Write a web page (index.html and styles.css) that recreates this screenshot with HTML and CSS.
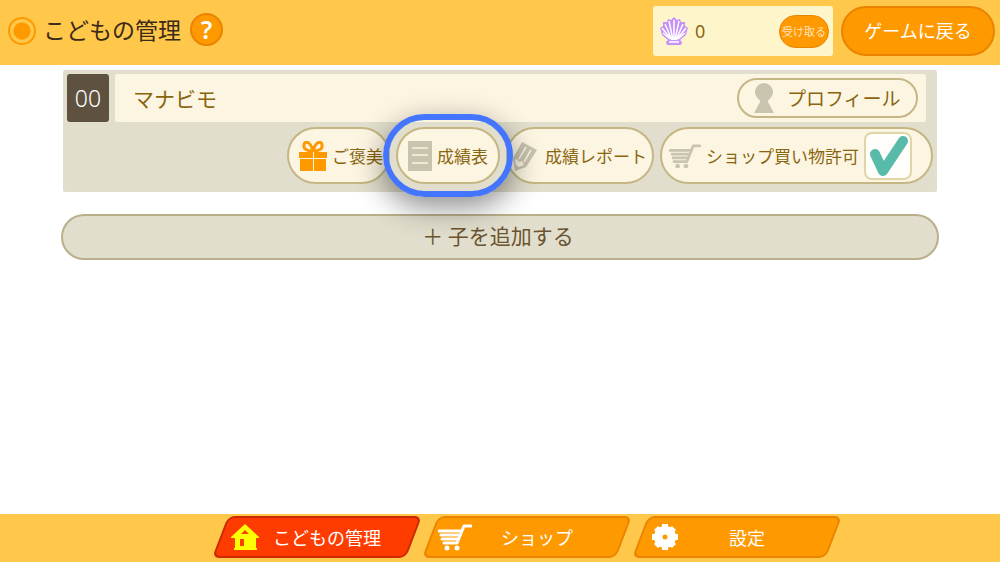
FILE: index.html
```html
<!DOCTYPE html>
<html lang="ja">
<head>
  <meta charset="UTF-8">
  <meta name="viewport" content="width=device-width, initial-scale=1.0">
  <title>こどもの管理</title>
  <link rel="stylesheet" href="styles.css">
</head>

<body>
  <header class="header">
    <span class="header-mark"></span>
    <h1 class="title">こどもの管理</h1>
    <button type="button" class="help-button">?</button>

    <div class="shell-box">
      <svg class="shell-icon" viewBox="0 0 28 28">
        <path d="M8 23 L2 18 L1 14 L0 11 L3 9 L3 5 L7 5 L8 2 L11 3 L14 0 L17 3 L20 2 L21 5 L25 5 L25 9 L28 11 L27 14 L26 18 L20 23 L22 25 L21 28 L7 28 L6 25 Z" fill="#c590f7"/>
        <path d="M14 23 V3 M13 23 L9 4 M15 23 L19 4 M12 23 L5 7 M16 23 L23 7 M11 22 L2 11 M17 22 L26 11 M10 22 L3 16 M18 22 L25 16 M9 25 H19" fill="none" stroke="#fff" stroke-width="1.5"/>
      </svg>
      <span class="shell-count">0</span>
      <button type="button" class="receive-button">受け取る</button>
    </div>
    <button type="button" class="back-button">ゲームに戻る</button>
  </header>

  <main class="main">
    <section class="child-card">
      <div class="child-row">
        <span class="child-number">00</span>
        <div class="child-name">
          <span>マナビモ</span>
          <button type="button" class="pill profile-button">
            <svg class="profile-icon" viewBox="0 0 20 30">
              <circle cx="10" cy="9" r="9"/>
              <path d="M5 15 H15 L14 19 L20 30 H0 L6 19 Z"/>
            </svg>
            プロフィール
          </button>
        </div>
      </div>

      <div class="actions">
        <button type="button" class="pill action reward">
          <svg class="gift-icon" viewBox="0 0 28 30">
            <path d="M14 10 C11 -1 5 0 5 4 C4 8 8 10 14 10 C20 10 24 8 23 4 C23 0 17 -1 14 10 Z" fill="none" stroke="#ff9900" stroke-width="3"/>
            <path d="M0 11 H28 V17 H0 Z M1 18 H14 V30 H1 Z M15 18 H27 V30 H15 Z" fill="#ff9900"/>
            <path d="M14.500 11 V30 M1 17.500 H27" stroke="#fcf5e2" stroke-width="1"/>
          </svg>
          ご褒美
        </button>
        <button type="button" class="pill action score selected">
          <svg class="list-icon" viewBox="0 0 24 30">
            <path d="M0 0 H24 V30 H0 Z" fill="#c9c4ae"/>
            <path d="M4 7 H20 M4 14 H20 M4 22 H20" stroke="#faf4e1" stroke-width="1.500"/>
          </svg>
          成績表
        </button>
        <button type="button" class="pill action report">
          <svg class="pencil-icon" viewBox="0 0 26 30">
            <path d="M10 1 L25 9 L14 26 L3 30 L1 17 Z" fill="#c9c4ae"/>
            <path d="M14 6 L7 18 M19 9 L12 21" fill="none" stroke="#faf4e1" stroke-width="1.500"/>
            <path d="M3 19 L5 18 L7 21 L10 20 L12 24 L7 26 L4 24 Z" fill="#faf4e1"/>
          </svg>
          成績レポート
        </button>
        <label class="pill action shop">
          <svg class="cart-icon" viewBox="0 0 34 26">
            <path d="M33 2 H26 L19 19 H5" class="cart-line"/>
            <path d="M1 7 H23 M3 11 H22 M4 15 H20" class="cart-line"/>
            <circle cx="9" cy="24" r="2.500"/>
            <circle cx="18" cy="24" r="2.500"/>
          </svg>
          ショップ買い物許可
          <span class="check">
            <input type="checkbox" class="check-input" checked>
            <svg class="check-icon" viewBox="0 0 48 48">
              <path d="M11 22 L19 39 L39 9"/>
            </svg>
          </span>
        </label>
      </div>
    </section>

    <button type="button" class="add-button">＋ 子を追加する</button>
  </main>

  <nav class="tabs">
    <a href="#children" class="tab active">
      <svg class="tab-icon" viewBox="0 0 34 28">
        <path fill-rule="evenodd" d="M17 1 L31 14 V15 H28 V25 H29 V27 H6 V25 H7 V15 H3 V14 Z M17 7 L13 11 H21 Z M12 16 V23 H16 V16 Z"/>
      </svg>
      <span class="tab-label">こどもの管理</span>
    </a>
    <a href="#shop" class="tab">
      <svg class="tab-icon" viewBox="0 0 34 28">
        <path d="M33 3 H26 L19 20 H6" class="cart-line"/>
        <path d="M1 8 H23 M3 12 H22 M4 16 H20" class="cart-line"/>
        <circle cx="9" cy="25" r="2.500"/>
        <circle cx="19" cy="25" r="2.500"/>
      </svg>
      <span class="tab-label">ショップ</span>
    </a>
    <a href="#settings" class="tab">
      <svg class="tab-icon" viewBox="0 0 34 28">
        <path d="M17 1 V27 M4 14 H30 M8 5 L26 23 M26 5 L8 23" stroke="currentColor" stroke-width="6" stroke-linejoin="round"/>
        <circle cx="17" cy="14" r="11"/>
        <circle cx="17" cy="14" r="2.500" class="gear-hole"/>
      </svg>
      <span class="tab-label">設定</span>
    </a>
  </nav>
</body>
</html>
```
FILE: styles.css
```css
:root {
  --bar: #ffc84a;
  --orange: #ff9900;
  --orange-dark: #ea8400;
  --card: #e1decd;
  --cream: #fcf5e2;
  --line: #c4b785;
  --text: #8a6510;
  --icon: #c9c4ae;
  --ring: #4475ff;
}

* {
  margin: 0;
  padding: 0;
  box-sizing: border-box;
}

body {
  font-family: "Noto Sans CJK JP", sans-serif;
  background: #fff;
  color: var(--text);
  min-height: 100vh;
  display: flex;
  flex-direction: column;
}

button {
  font: inherit;
  color: inherit;
  cursor: pointer;
}

svg {
  flex: none;
  fill: currentColor;
}

/* header */
.header {
  display: flex;
  align-items: center;
  height: 65px;
  padding: 0 5px 3px 8px;
  background: var(--bar);
}

.header-mark {
  width: 28px;
  height: 28px;
  border: 2px solid var(--orange);
  border-radius: 50%;
  background: radial-gradient(circle, var(--orange) 8px, transparent 9px);
}

.title {
  margin: 0 9px 0 7px;
  padding-bottom: 4px;
  font-size: 23px;
  font-weight: 400;
  color: #3b2a18;
}

.help-button {
  width: 33px;
  height: 33px;
  margin-bottom: 4px;
  border: 2px solid var(--orange-dark);
  border-radius: 50%;
  background: var(--orange);
  color: #fff;
  font-family: "Noto Sans", sans-serif;
  font-size: 25px;
  font-weight: 600;
  line-height: 28px;
}

.shell-box {
  display: flex;
  align-items: center;
  width: 180px;
  height: 50px;
  margin-left: auto;
  padding: 0 4px 0 7px;
  border-radius: 3px;
  background: #fff5ca;
}

.shell-icon {
  width: 28px;
  height: 28px;
}

.shell-count {
  margin-left: 7px;
  font-family: "Noto Sans", sans-serif;
  font-size: 18px;
}

.receive-button {
  width: 50px;
  height: 33px;
  margin-left: auto;
  border: 1px solid var(--orange-dark);
  border-radius: 17px;
  background: var(--orange);
  color: #fff;
  font-size: 11px;
  font-weight: 300;
  white-space: nowrap;
}

.back-button {
  width: 154px;
  height: 50px;
  margin-left: 8px;
  padding-bottom: 2px;
  border: 2px solid var(--orange-dark);
  border-radius: 25px;
  background: var(--orange);
  color: #fff;
  font-size: 18px;
}

/* child card */
.main {
  flex: 1;
  padding: 5px 61px;
}

.child-card {
  margin: 0 2px;
  padding: 4px 4px 8px;
  border-radius: 2px;
  background: var(--card);
}

.child-row {
  display: flex;
  gap: 6px;
  height: 48px;
  padding-right: 7px;
}

.child-number {
  width: 42px;
  border-radius: 3px;
  background: #5e5140;
  color: #fff;
  font-family: "Noto Sans", sans-serif;
  font-size: 23px;
  font-weight: 300;
  line-height: 48px;
  text-align: center;
}

.child-name {
  flex: 1;
  display: flex;
  align-items: center;
  justify-content: space-between;
  padding: 0 8px 0 18px;
  border-radius: 2px;
  background: var(--cream);
  font-size: 21px;
  line-height: 28px;
}

.pill {
  display: flex;
  align-items: center;
  border: 2px solid var(--line);
  border-radius: 29px;
  background: var(--cream);
  white-space: nowrap;
}

.profile-button {
  width: 181px;
  height: 40px;
  gap: 13px;
  padding-left: 15px;
  font-size: 19px;
}

.profile-icon {
  width: 20px;
  height: 30px;
  color: var(--icon);
}

.actions {
  display: flex;
  justify-content: flex-end;
  gap: 6px;
  margin-top: 5px;
}

.action {
  height: 57px;
  gap: 5px;
  padding: 0 8px 0 10px;
  font-size: 17px;
}

.reward {
  width: 103px;
}

.gift-icon {
  width: 28px;
  height: 30px;
}

.score {
  width: 104px;
}

.list-icon {
  width: 24px;
  height: 30px;
}

.report {
  width: 148px;
  gap: 7px;
  padding-left: 4px;
}

.pencil-icon {
  width: 26px;
  height: 30px;
}

.shop {
  width: 273px;
  padding-left: 7px;
  cursor: pointer;
}

.cart-icon {
  width: 32px;
  height: 24px;
  color: var(--icon);
}

.cart-line {
  fill: none;
  stroke: currentColor;
  stroke-width: 3;
  stroke-linecap: round;
  stroke-linejoin: round;
}

/* blue ring that lies over the neighbouring buttons */
.selected {
  position: relative;
  z-index: 1;
}

.selected::after {
  content: "";
  position: absolute;
  inset: -15px;
  border: 6px solid var(--ring);
  border-radius: 42px;
  box-shadow: 0 10px 30px rgba(0, 0, 0, 0.45);
}

.check {
  display: grid;
}

.check-input,
.check-icon {
  grid-area: 1 / 1;
  width: 48px;
  height: 48px;
}

.check-input {
  appearance: none;
  border: 2px solid #e0d5a8;
  border-radius: 8px;
  background: #fffefa;
}

.check-icon {
  display: none;
  fill: none;
  stroke: #58bba9;
  stroke-width: 10;
  stroke-linecap: round;
  stroke-linejoin: round;
  pointer-events: none;
}

.check-input:checked + .check-icon {
  display: block;
}

.add-button {
  display: block;
  width: 100%;
  height: 46px;
  margin-top: 22px;
  padding: 0 4px 4px 0;
  border: 2px solid #b9b08b;
  border-radius: 23px;
  background: var(--card);
  color: #6a5430;
  font-size: 21px;
  line-height: 38px;
}

/* bottom tabs */
.tabs {
  display: flex;
  justify-content: center;
  gap: 16px;
  height: 48px;
  padding: 2px 0 4px 54px;
  background: var(--bar);
}

.tab {
  position: relative;
  z-index: 0;
  display: flex;
  align-items: center;
  width: 194px;
  padding: 0 22px 0 8px;
  color: #fff;
  font-size: 18px;
  text-decoration: none;
}

.tab::before {
  content: "";
  position: absolute;
  z-index: -1;
  inset: 0;
  border: 2px solid var(--orange-dark);
  border-radius: 7px;
  background: var(--orange);
  transform: skewX(-21deg);
}

.tab.active::before {
  border-color: #c92a00;
  background: #ff3c00;
}

.tab-icon {
  width: 34px;
  height: 28px;
}

.active .tab-icon {
  color: #ffff00;
}

.gear-hole {
  color: var(--orange);
}

.tab-label {
  flex: 1;
  text-align: center;
}
```
